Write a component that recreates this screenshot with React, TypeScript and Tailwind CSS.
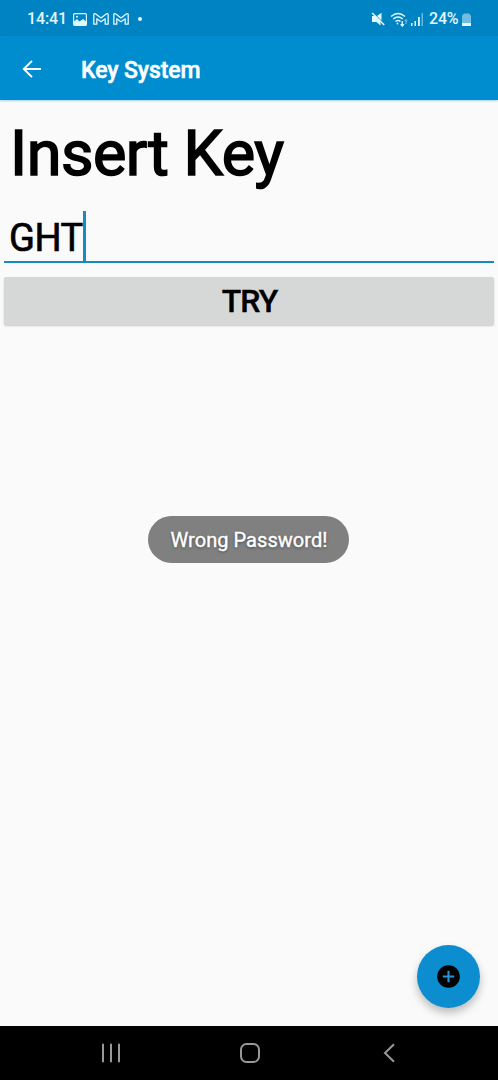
function GmailIcon() {
  return (
    <svg width="16" height="12" viewBox="0 0 16 12" fill="none" stroke="currentColor" strokeWidth="1.3" strokeLinejoin="round">
      <path d="M.8 11.200V1.800c0-1.200 1.200-1.400 2-.8L8 5l5.200-4c.8-.6 2-.4 2 .8v9.400h-3V5.800L8 8.800l-4.200-3v5.400z" />
    </svg>
  )
}

function StatusBar() {
  return (
    <div className="flex h-9 items-center justify-between bg-[#0083c3] pt-0.5 pl-[27px] pr-[27px] text-[#e2f8ff]">
      <div className="flex items-center">
        <span className="w-[46px] text-base leading-none font-medium tracking-[-0.1px]">14:41</span>
        <svg width="14" height="13" viewBox="0 0 14 13">
          <rect x=".6" y=".6" width="12.800" height="11.800" rx="1" fill="none" stroke="currentColor" strokeWidth="1.200" />
          <path d="M1 8.500l3-2.500 2.500 2.500L10 6l3 2.500V12H1z" fill="currentColor" />
          <circle cx="4" cy="3.800" r="1" fill="currentColor" />
        </svg>
        <div className="ml-[6px] flex gap-1">
          <GmailIcon />
          <GmailIcon />
        </div>
        <span className="ml-[9px] size-1 rounded-full bg-current" />
      </div>

      <div className="flex items-center">
        <svg width="14" height="14" viewBox="0 0 14 14" fill="currentColor">
          <path d="M1 4h3.500L9.500 9v4.500L5.500 10H1zM6 4L10.500.8v7.700z" />
          <path d="M1.200 1l12 12" fill="none" stroke="currentColor" strokeWidth="1.600" />
        </svg>
        <svg className="ml-[5px]" width="18" height="15" viewBox="0 0 18 15" fill="none" stroke="currentColor" strokeWidth="1.300">
          <path d="M1 4.500q7-6 14 0M3.200 7q4.800-4 9.600 0M5.500 9.500q2.500-2 5 0" />
          <circle cx="7.500" cy="11.500" r=".9" fill="currentColor" stroke="none" />
          <path d="M12.300 9v5M10.600 12.300l1.700 1.700 1.700-1.700" />
          <path d="M16 12V8M14.800 9L16 7.800 17.200 9" opacity=".45" />
        </svg>
        <svg className="ml-[3px]" width="12" height="13" viewBox="0 0 12 13" fill="currentColor">
          <path d="M0 10h1.500v3H0zM3.500 8H5v5H3.500zM7 4h1.800v9H7z" />
          <path d="M10.500 0H12v13h-1.500z" opacity=".45" />
        </svg>
        <span className="ml-[6px] w-[31px] text-base leading-none font-medium tracking-[-0.2px] whitespace-nowrap">24%</span>
        <svg className="ml-[2px]" width="9" height="13" viewBox="0 0 9 13" fill="currentColor">
          <path d="M0 2.500L2 .5h5l2 2V10H0z" opacity=".5" />
          <path d="M0 10h9v3H0z" />
        </svg>
      </div>
    </div>
  )
}

function Toolbar() {
  return (
    <header className="z-10 flex h-16 items-center bg-[#008dd0] pl-[22px] pt-0.5 text-white shadow-[0_1px_2px_rgba(0,141,208,0.35)]">
      <svg width="20" height="18" viewBox="0 0 20 18" fill="none" stroke="currentColor" strokeWidth="1.900">
        <path d="M19 9H2M10 .8L1.800 9l8.200 8.200" />
      </svg>
      <h1 className="ml-[39px] pt-0.5 text-[23px] leading-none font-medium tracking-[-0.1px] [-webkit-text-stroke:0.5px_white]">Key System</h1>
    </header>
  )
}

function NavBar() {
  return (
    <nav className="flex h-[54px] shrink-0 items-center justify-between bg-black pr-[103px] pl-[101px] text-[#989898]">
      <svg width="20" height="20" viewBox="0 0 20 20" stroke="currentColor" strokeWidth="2" strokeLinecap="round">
        <path d="M2 1.500v17M10 1.500v17M18 1.500v17" />
      </svg>
      <svg className="-ml-[5px]" width="20" height="20" viewBox="0 0 20 20" fill="none" stroke="currentColor" strokeWidth="2">
        <rect x="1" y="1" width="18" height="18" rx="5.500" />
      </svg>
      <svg width="12" height="20" viewBox="0 0 12 20" fill="none" stroke="currentColor" strokeWidth="2">
        <path d="M11 1.200L2 10l9 8.800" />
      </svg>
    </nav>
  )
}

export default function App() {
  return (
    <div className="relative flex h-[1080px] w-[498px] flex-col overflow-hidden bg-[#fafafa] font-[Roboto,sans-serif] text-black">
      <StatusBar />
      <Toolbar />

      <main className="flex flex-1 flex-col px-1">
        <h2 className="mt-[15px] h-[80px] pl-1.5 text-[63px] leading-[78px] tracking-[-0.5px] whitespace-nowrap [-webkit-text-stroke:1.6px_black]">
          Insert Key
        </h2>
        <div className="mt-4 flex h-[52px] items-start border-b-2 border-[#168bbf] pl-[5px]">
          <span className="text-[38px] leading-[54px] tracking-[-0.5px] [-webkit-text-stroke:0.7px_black]">GHT</span>
          <span className="h-[50px] w-[3px] bg-[#168bbf]" />
        </div>
        <button className="mt-[14px] h-12 rounded-[2px] bg-[#d6d8d7] pl-px text-[32px] leading-none font-medium tracking-[-1px] shadow-[0_1px_2px_rgba(0,0,0,0.2)] [-webkit-text-stroke:0.4px_black]">
          TRY
        </button>
      </main>

      <NavBar />

      <div className="absolute top-[516px] left-[148px] flex h-[47px] w-[201px] items-center justify-center rounded-full bg-[#808080] pt-px pl-px text-xl tracking-[0.05px] text-white [-webkit-text-stroke:0.4px_white] [text-shadow:0_1px_3px_rgba(0,0,0,0.5)]">
        Wrong Password!
      </div>

      <button className="absolute top-[945px] left-[417px] flex size-[63px] items-center justify-center rounded-full bg-[#0b8dd0] shadow-[0_5px_9px_rgba(0,0,0,0.25)]">
        <svg width="23" height="23" viewBox="0 0 24 24">
          <circle cx="12" cy="12" r="11.800" fill="black" />
          <path d="M12 6v12M6 12h12" stroke="#2397cf" strokeWidth="2.200" />
        </svg>
      </button>
    </div>
  )
}
